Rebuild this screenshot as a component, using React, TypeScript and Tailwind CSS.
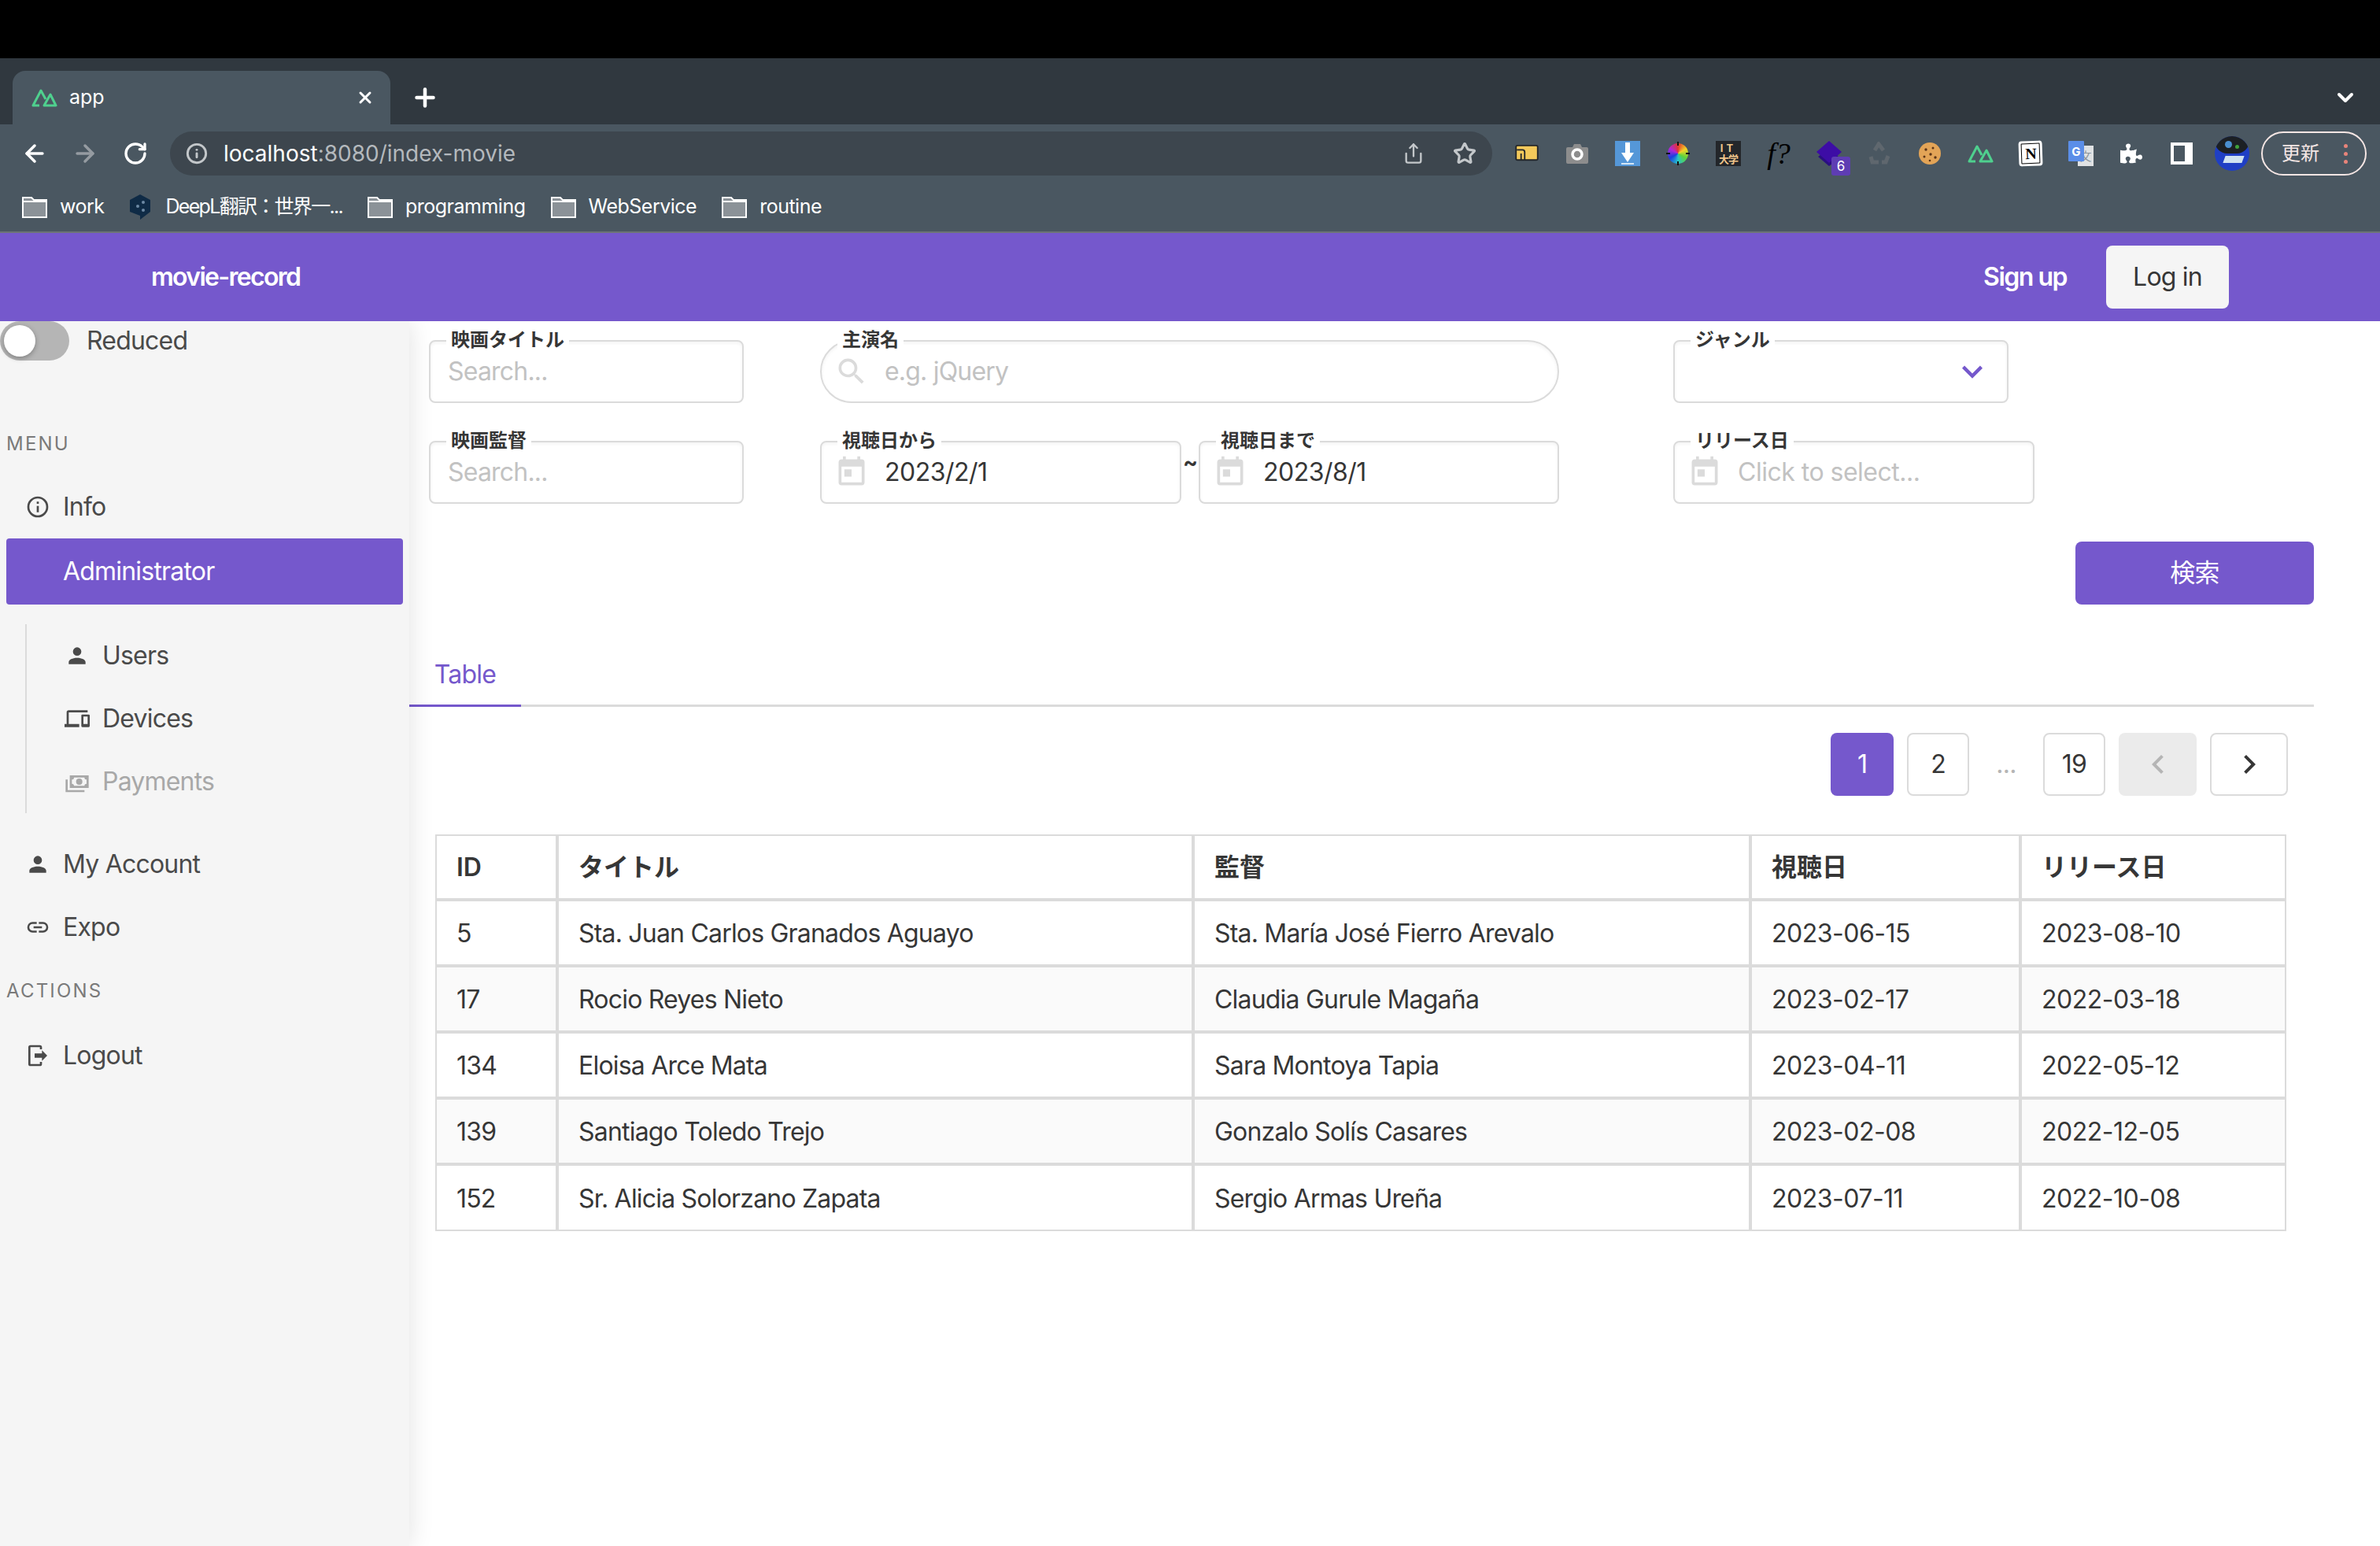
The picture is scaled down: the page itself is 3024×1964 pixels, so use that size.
import React from 'react';
import { ArrowLeft, ArrowRight, RotateCw, Info, Share, Star, Plus, X, ChevronDown } from 'lucide-react';
import { FaPuzzlePiece } from 'react-icons/fa';

const mdi = {
  info: 'M11,9H13V7H11M12,20C7.59,20 4,16.41 4,12C4,7.59 7.59,4 12,4C16.41,4 20,7.59 20,12C20,16.41 16.41,20 12,20M12,2A10,10 0 0,0 2,12A10,10 0 0,0 12,22A10,10 0 0,0 22,12A10,10 0 0,0 12,2M11,17H13V11H11V17Z',
  account: 'M12,4A4,4 0 0,1 16,8A4,4 0 0,1 12,12A4,4 0 0,1 8,8A4,4 0 0,1 12,4M12,14C16.42,14 20,15.79 20,18V20H4V18C4,15.79 7.58,14 12,14Z',
  devices: 'M22,17H18V10H22M23,8H17A1,1 0 0,0 16,9V19A1,1 0 0,0 17,20H23A1,1 0 0,0 24,19V9A1,1 0 0,0 23,8M4,6H22V4H4A2,2 0 0,0 2,6V17H0V20H14V17H4V6Z',
  cash: 'M5,6H23V18H5V6M14,9A3,3 0 0,1 17,12A3,3 0 0,1 14,15A3,3 0 0,1 11,12A3,3 0 0,1 14,9M9,8A2,2 0 0,1 7,10V14A2,2 0 0,1 9,16H19A2,2 0 0,1 21,14V10A2,2 0 0,1 19,8H9M1,10H3V20H19V22H1V10Z',
  link: 'M3.9,12C3.9,10.29 5.29,8.9 7,8.9H11V7H7A5,5 0 0,0 2,12A5,5 0 0,0 7,17H11V15.1H7C5.29,15.1 3.9,13.71 3.9,12M8,13H16V11H8V13M17,7H13V8.9H17C18.71,8.9 20.1,10.29 20.1,12C20.1,13.71 18.71,15.1 17,15.1H13V17H17A5,5 0 0,0 22,12A5,5 0 0,0 17,7Z',
  logout: 'M16,17V14H9V10H16V7L21,12L16,17M14,2A2,2 0 0,1 16,4V6H14V4H5V20H14V18H16V20A2,2 0 0,1 14,22H5A2,2 0 0,1 3,20V4A2,2 0 0,1 5,2H14Z',
  magnify: 'M9.5,3A6.5,6.5 0 0,1 16,9.5C16,11.11 15.41,12.59 14.44,13.73L14.71,14H15.5L20.5,19L19,20.5L14,15.5V14.71L13.73,14.44C12.59,15.41 11.11,16 9.5,16A6.5,6.5 0 0,1 3,9.5A6.5,6.5 0 0,1 9.5,3M9.5,5C7,5 5,7 5,9.5C5,12 7,14 9.5,14C12,14 14,12 14,9.5C14,7 12,5 9.5,5Z',
  calendar: 'M7,10H12V15H7M19,19H5V8H19M19,3H18V1H16V3H8V1H6V3H5C3.89,3 3,3.9 3,5V19A2,2 0 0,0 5,21H19A2,2 0 0,0 21,19V5A2,2 0 0,0 19,3Z',
  chevronDown: 'M7.41,8.58L12,13.17L16.59,8.58L18,10L12,16L6,10L7.41,8.58Z',
  chevronLeft: 'M15.41,16.58L10.83,12L15.41,7.41L14,6L8,12L14,18L15.41,16.58Z',
  chevronRight: 'M8.59,16.58L13.17,12L8.59,7.41L10,6L16,12L10,18L8.59,16.58Z',
};

const Mdi = ({ d, className }: { d: string; className?: string }) => (
  <svg viewBox="0 0 24 24" className={className} fill="currentColor">
    <path d={d} />
  </svg>
);

const Nuxt = ({ className }: { className?: string }) => (
  <svg viewBox="0 0 33 24" className={className} fill="none" stroke="#4fd08e" strokeWidth="3" strokeLinejoin="round">
    <path d="M10 22H2L12 3l6 11" />
    <path d="M24 8l7 14H16z" />
  </svg>
);

const FolderIcon = () => (
  <svg viewBox="0 0 32 28" className="h-[28px] w-[32px] shrink-0" fill="none">
    <path d="M1 5V2h11l3 3h16v22H1z" fill="#8b9298" stroke="#fff" strokeWidth="2" />
    <path d="M1 7h30" stroke="#fff" strokeWidth="2" />
  </svg>
);

const Bookmark = ({ label }: { label: string }) => (
  <div className="flex items-center gap-4">
    <FolderIcon />
    <span>{label}</span>
  </div>
);

const extensions: React.ReactNode[] = [
  <svg viewBox="0 0 32 24" className="h-[22px] w-[32px]" key="files">
    <rect x="1" y="1" width="30" height="20" rx="2" fill="#f3c95b" stroke="#23262a" strokeWidth="2" />
    <path d="M2 7h8a3 3 0 0 1 3 3v11M8 21v-9" fill="none" stroke="#23262a" strokeWidth="2" />
  </svg>,
  <svg viewBox="0 0 30 28" className="h-[28px] w-[30px]" key="camera">
    <path d="M3 6h6l2-4h8l2 4h6a2 2 0 0 1 2 2v17a2 2 0 0 1-2 2H3a2 2 0 0 1-2-2V8a2 2 0 0 1 2-2z" fill="#8d8d8d" />
    <circle cx="15" cy="15" r="6" fill="none" stroke="#fff" strokeWidth="3.5" />
  </svg>,
  <svg viewBox="0 0 32 32" className="h-[32px] w-[32px]" key="download">
    <rect width="32" height="32" fill="#5597d8" />
    <path d="M13 2h6v13h5l-8 12-8-12h5z" fill="#fff" />
    <path d="M8 29h16" stroke="#fff" strokeWidth="1.5" />
  </svg>,
  <div className="relative flex h-[32px] w-[32px] items-center justify-center" key="color">
    <div className="h-[26px] w-[26px] rounded-full bg-[conic-gradient(#e0342f,#f5d328,#5fd33a,#27c6c8,#1a3fe0,#b027d6,#e0342f)]" />
    <svg viewBox="0 0 32 32" className="absolute inset-0">
      <path d="M16 1v5M16 26v5M1 16h5M26 16h5" stroke="#111" strokeWidth="2" />
    </svg>
  </div>,
  <div className="flex h-[32px] w-[32px] flex-col items-center justify-center bg-[#23262a] text-[13px] font-bold leading-[14px] tracking-normal text-[#f0c68c]" key="it">
    <span className="tracking-[4px]">IT</span>
    <span className="tracking-[-1px]">大学</span>
  </div>,
  <span className="font-['Liberation_Serif',serif] text-[38px] italic leading-none tracking-normal text-black" key="f">f?</span>,
  <div className="relative h-[32px] w-[32px]" key="stack">
    <svg viewBox="0 0 32 32" className="h-[32px] w-[32px]">
      <path d="M16 10l14 12-14 10L2 20z" fill="#2a0f80" />
      <path d="M16 0l16 14-16 14L0 14z" fill="#3d0da5" />
    </svg>
    <span className="absolute left-[19px] top-[20px] flex h-[24px] w-[24px] items-center justify-center rounded-[3px] bg-[#5e3db3] text-[17px] leading-none tracking-normal text-white">6</span>
  </div>,
  <svg viewBox="0 0 30 30" className="h-[30px] w-[30px]" key="recycle" fill="none" stroke="#5f676e" strokeWidth="5">
    <path d="M9 11l5-8 6 8M4 19l2 7h8M26 18l-3 8h-5" />
  </svg>,
  <svg viewBox="0 0 28 28" className="h-[28px] w-[28px]" key="cookie">
    <circle cx="14" cy="14" r="14" fill="#e3a457" />
    <circle cx="9" cy="9" r="1.7" fill="#5b3418" />
    <circle cx="18" cy="7" r="1.5" fill="#5b3418" />
    <circle cx="15" cy="15" r="1.7" fill="#5b3418" />
    <circle cx="7" cy="18" r="1.5" fill="#5b3418" />
    <circle cx="21" cy="19" r="1.7" fill="#5b3418" />
    <circle cx="14" cy="23" r="1.3" fill="#5b3418" />
  </svg>,
  <Nuxt className="h-[24px] w-[33px]" key="nuxt" />,
  <div className="flex h-[32px] w-[30px] -rotate-2 items-center justify-center rounded-[4px] border-[3px] border-white bg-black" key="notion">
    <div className="flex h-[24px] w-[22px] items-center justify-center bg-white font-['Liberation_Serif',serif] text-[20px] font-bold leading-none text-black">N</div>
  </div>,
  <div className="relative h-[32px] w-[32px]" key="translate">
    <div className="absolute bottom-0 right-0 flex h-[26px] w-[20px] items-center justify-center bg-[#dfe1e3] text-[15px] leading-none tracking-normal text-[#8b949b]">文</div>
    <div className="absolute left-0 top-0 flex h-[26px] w-[20px] items-center justify-center rounded-[1px] bg-[#5b8ee8] text-[15px] font-bold leading-none tracking-normal text-white">G</div>
  </div>,
  <FaPuzzlePiece className="h-[28px] w-[28px] text-white" key="puzzle" />,
  <div className="h-[28px] w-[28px] border-y-[4px] border-l-[4px] border-r-[10px] border-white" key="side" />,
  <div className="relative h-[44px] w-[44px] overflow-hidden rounded-full bg-[#1f3fc4]" key="avatar">
    <div className="h-[22px] w-[44px] rounded-b-[16px] bg-[#1c2024]" />
    <div className="absolute left-[13px] top-[6px] h-[9px] w-[9px] rounded-full bg-[#4a8fd0]" />
    <div className="absolute left-[26px] top-[11px] h-[5px] w-[5px] rounded-full bg-[#3fa33a]" />
    <div className="absolute left-[12px] top-[25px] h-[9px] w-[24px] skew-x-[-20deg] bg-[#cfe2f0]" />
  </div>,
];

const Field = ({ label, className, children }: { label: string; className: string; children: React.ReactNode }) => (
  <div className={`relative flex h-[80px] items-center border-2 border-[#dbdbdb] bg-white shadow-[inset_0_2px_4px_rgba(10,10,10,0.05)] ${className}`}>
    <span className="absolute -top-[14px] left-[20px] bg-white px-[6px] text-[24px] font-semibold leading-[24px] tracking-normal text-[#363636]">{label}</span>
    {children}
  </div>
);

const inputClass = 'w-full bg-transparent text-[32px] text-[#363636] outline-none placeholder:text-[#c2c2c2]';

const DateField = ({ label, value, placeholder, className }: { label: string; value?: string; placeholder?: string; className: string }) => (
  <Field label={label} className={`rounded-lg ${className}`}>
    <Mdi d={mdi.calendar} className="ml-[16px] h-[44px] w-[44px] shrink-0 text-[#dbdbdb]" />
    <input readOnly value={value ?? ''} placeholder={placeholder} className={`${inputClass} ml-[20px] tracking-[-0.5px]`} />
  </Field>
);

const MenuItem = ({ icon, label, muted }: { icon: string; label: string; muted?: boolean }) => (
  <div className={`flex h-[80px] items-center gap-4 ${muted ? 'text-[#a8a8a8]' : 'text-[#4a4a4a]'}`}>
    <Mdi d={icon} className="h-[32px] w-[32px] shrink-0" />
    <span>{label}</span>
  </div>
);

const rows = [
  ['5', 'Sta. Juan Carlos Granados Aguayo', 'Sta. María José Fierro Arevalo', '2023-06-15', '2023-08-10'],
  ['17', 'Rocio Reyes Nieto', 'Claudia Gurule Magaña', '2023-02-17', '2022-03-18'],
  ['134', 'Eloisa Arce Mata', 'Sara Montoya Tapia', '2023-04-11', '2022-05-12'],
  ['139', 'Santiago Toledo Trejo', 'Gonzalo Solís Casares', '2023-02-08', '2022-12-05'],
  ['152', 'Sr. Alicia Solorzano Zapata', 'Sergio Armas Ureña', '2023-07-11', '2022-10-08'],
];
const headers = ['ID', 'タイトル', '監督', '視聴日', 'リリース日'];
const colWidths = ['w-[155px]', 'w-[808px]', 'w-[708px]', 'w-[343px]', 'w-[334px]'];

export default function App() {
  return (
    <div className="flex h-[1964px] w-[3024px] flex-col overflow-hidden bg-white font-['Inter','Noto_Sans_CJK_JP',sans-serif] text-[32px] tracking-[-0.8px] text-[#363636]">
      {/* browser chrome */}
      <div className="h-[74px] bg-black" />
      <div className="flex h-[84px] items-end justify-between bg-[#30383f] pl-4 pr-[28px]">
        <div className="flex items-center">
          <div className="flex h-[68px] w-[480px] items-center rounded-t-[16px] bg-[#4a5761] pl-6 pr-5 text-[25px] tracking-normal text-white">
            <Nuxt className="h-[24px] w-[33px]" />
            <span className="ml-[15px] flex-1">app</span>
            <X className="h-[24px] w-[24px]" strokeWidth={3} />
          </div>
          <Plus className="ml-[26px] h-[36px] w-[36px] text-white" strokeWidth={3} />
        </div>
        <ChevronDown className="mb-[18px] h-[32px] w-[32px] text-white" strokeWidth={3} />
      </div>
      <div className="flex h-[74px] items-center bg-[#4a5761] pl-3">
        <div className="flex w-[64px] justify-center"><ArrowLeft className="h-[34px] w-[34px] text-white" strokeWidth={2.5} /></div>
        <div className="flex w-[64px] justify-center"><ArrowRight className="h-[34px] w-[34px] text-[#959ba1]" strokeWidth={2.5} /></div>
        <div className="flex w-[64px] justify-center"><RotateCw className="h-[32px] w-[32px] text-white" strokeWidth={2.5} /></div>
        <div className="ml-3 flex h-[56px] w-[1680px] items-center rounded-full bg-[#3d464e] pl-5 pr-[20px]">
          <Info className="h-[28px] w-[28px] text-[#c3c7ca]" strokeWidth={2.5} />
          <span className="ml-[20px] flex-1 text-[28px] tracking-normal text-[#b4b9bd]"><span className="text-white">localhost</span>:8080/index-movie</span>
          <Share className="h-[28px] w-[28px] text-[#c3c7ca]" />
          <Star className="ml-[36px] h-[30px] w-[30px] text-[#c3c7ca]" strokeWidth={2.5} />
        </div>
        <div className="ml-3 flex">
          {extensions.map((icon, i) => (
            <div key={i} className="flex h-[64px] w-[64px] items-center justify-center">{icon}</div>
          ))}
        </div>
        <div className="ml-[5px] flex h-[56px] w-[134px] items-center justify-between rounded-full border-2 border-[#f5e6e4] pl-[24px] pr-[22px] text-[24px] tracking-normal text-[#f5e6e4]">
          <span>更新</span>
          <div className="flex flex-col gap-[5px]">
            <div className="h-[5px] w-[5px] rounded-full bg-[#e8847a]" />
            <div className="h-[5px] w-[5px] rounded-full bg-[#e8847a]" />
            <div className="h-[5px] w-[5px] rounded-full bg-[#e8847a]" />
          </div>
        </div>
      </div>
      <div className="flex h-[64px] items-center gap-[32px] border-b-2 border-[#6d7378] bg-[#4a5761] pl-[28px] text-[25px] tracking-[-0.5px] text-white">
        <Bookmark label="work" />
        <div className="flex items-center gap-[20px]">
          <svg viewBox="0 0 26 32" className="h-[32px] w-[26px]">
            <path d="M13 0l13 7v15l-13 10v-5L0 22V7z" fill="#0f2b46" />
            <circle cx="10" cy="15" r="2" fill="#6d8aa5" />
            <circle cx="17" cy="10" r="2" fill="#6d8aa5" />
            <circle cx="17" cy="20" r="2" fill="#6d8aa5" />
          </svg>
          <span className="tracking-[-1.7px]">DeepL翻訳：世界一...</span>
        </div>
        <Bookmark label="programming" />
        <Bookmark label="WebService" />
        <Bookmark label="routine" />
      </div>

      {/* app navbar */}
      <header className="relative z-20 flex h-[112px] shrink-0 items-center bg-[#7558cc] pl-[192px] pr-[192px] text-white">
        <span className="flex-1 font-semibold tracking-[-1.7px]">movie-record</span>
        <span className="font-semibold tracking-[-1.5px]">Sign up</span>
        <div className="ml-[50px] flex h-[80px] w-[156px] items-center justify-center rounded-lg bg-[#f5f5f5] text-[#363636]">Log in</div>
      </header>

      <div className="flex min-h-0 flex-1">
        {/* sidebar */}
        <aside className="relative z-10 w-[520px] shrink-0 bg-[#f5f5f5] pl-2 pr-2 shadow-[0_0_30px_rgba(0,0,0,0.12)]">
          <div className="-ml-2 flex h-[50px] items-center">
            <div className="flex h-[50px] w-[88px] items-center rounded-full bg-[#b5b5b5] pl-[5px]">
              <div className="h-[40px] w-[40px] rounded-full bg-white shadow-[0_2px_6px_rgba(0,0,0,0.3)]" />
            </div>
            <span className="ml-[22px] text-[#4a4a4a]">Reduced</span>
          </div>
          <div className="mb-[28px] mt-[94px] h-[24px] text-[24px] leading-[24px] tracking-[2.2px] text-[#7a7a7a]">MENU</div>
          <div className="pl-6">
            <MenuItem icon={mdi.info} label="Info" />
          </div>
          <div className="flex h-[84px] items-center rounded bg-[#7558cc] pl-[72px] text-white">Administrator</div>
          <div className="ml-[24px] mt-[25px] border-l-2 border-[#dbdbdb] pl-[48px]">
            <MenuItem icon={mdi.account} label="Users" />
            <MenuItem icon={mdi.devices} label="Devices" />
            <MenuItem icon={mdi.cash} label="Payments" muted />
          </div>
          <div className="mt-[25px] pl-6">
            <MenuItem icon={mdi.account} label="My Account" />
            <MenuItem icon={mdi.link} label="Expo" />
          </div>
          <div className="flex h-[82px] items-center text-[24px] tracking-[2.2px] text-[#7a7a7a]">ACTIONS</div>
          <div className="mt-[1px] pl-6">
            <MenuItem icon={mdi.logout} label="Logout" />
          </div>
        </aside>

        {/* main */}
        <main className="min-w-0 flex-1 pl-[25px] pr-[84px] pt-6">
          <div className="flex">
            <div className="flex w-[400px] flex-col gap-[48px]">
              <Field label="映画タイトル" className="rounded-lg">
                <input placeholder="Search..." className={`${inputClass} pl-[22px]`} />
              </Field>
              <Field label="映画監督" className="rounded-lg">
                <input placeholder="Search..." className={`${inputClass} pl-[22px]`} />
              </Field>
            </div>
            <div className="ml-[97px] flex w-[939px] flex-col gap-[48px]">
              <Field label="主演名" className="rounded-full">
                <Mdi d={mdi.magnify} className="ml-[16px] h-[44px] w-[44px] shrink-0 text-[#dbdbdb]" />
                <input placeholder="e.g. jQuery" className={`${inputClass} ml-[20px]`} />
              </Field>
              <div className="flex items-center">
                <DateField label="視聴日から" value="2023/2/1" className="w-[459px]" />
                <span className="mb-[26px] flex w-[22px] justify-center text-[28px] font-bold leading-none text-[#363636]">~</span>
                <DateField label="視聴日まで" value="2023/8/1" className="w-[458px]" />
              </div>
            </div>
            <div className="ml-[145px] flex flex-col gap-[48px]">
              <Field label="ジャンル" className="w-[426px] justify-end rounded-lg">
                <Mdi d={mdi.chevronDown} className="mr-[18px] h-[52px] w-[52px] text-[#7558cc]" />
              </Field>
              <DateField label="リリース日" placeholder="Click to select..." className="w-[459px]" />
            </div>
          </div>

          <div className="mt-[48px] flex justify-end">
            <button className="h-[80px] w-[303px] rounded-lg bg-[#7558cc] text-white">検索</button>
          </div>

          <div className="-ml-[25px] mt-[50px] flex h-[80px] border-b-[3px] border-[#dbdbdb]">
            <div className="-mb-[3px] flex h-[80px] w-[142px] items-center justify-center border-b-[3px] border-[#7558cc] text-[#7558cc]">Table</div>
          </div>

          <div className="mt-[33px] flex items-center justify-end gap-[17px] pr-[33px]">
            <div className="flex h-[80px] w-[80px] items-center justify-center rounded-lg bg-[#7558cc] text-white">1</div>
            <div className="flex h-[80px] w-[79px] items-center justify-center rounded-lg border-2 border-[#dbdbdb]">2</div>
            <div className="flex h-[80px] w-[60px] items-center justify-center text-[#b5b5b5]">...</div>
            <div className="flex h-[80px] w-[79px] items-center justify-center rounded-lg border-2 border-[#dbdbdb]">19</div>
            <div className="flex h-[80px] w-[99px] items-center justify-center rounded-lg bg-[#ebebeb] text-[#b5b5b5]">
              <Mdi d={mdi.chevronLeft} className="h-[48px] w-[48px]" />
            </div>
            <div className="flex h-[80px] w-[99px] items-center justify-center rounded-lg border-2 border-[#dbdbdb]">
              <Mdi d={mdi.chevronRight} className="h-[48px] w-[48px]" />
            </div>
          </div>

          <div className="ml-[8px] mt-[49px] w-[2352px] border-2 border-[#dbdbdb]">
            <table className="w-full table-fixed border-separate border-spacing-0">
              <thead>
                <tr className="h-[83px]">
                  {headers.map((h, i) => (
                    <th key={h} className={`${colWidths[i]} border-b-4 border-[#dbdbdb] pl-[25px] text-left font-semibold tracking-normal ${i < 4 ? 'border-r-4' : ''}`}>{h}</th>
                  ))}
                </tr>
              </thead>
              <tbody>
                {rows.map((row, r) => (
                  <tr key={row[0]} className={`${r < 4 ? 'h-[84px]' : 'h-[81px]'} ${r % 2 === 1 ? 'bg-[#fafafa]' : 'bg-white'}`}>
                    {row.map((cell, i) => (
                      <td key={i} className={`border-[#dbdbdb] pl-[25px] pt-[2px] ${i >= 3 ? 'tracking-[-0.5px]' : ''} ${r < 4 ? 'border-b-4' : ''} ${i < 4 ? 'border-r-4' : ''}`}>{cell}</td>
                    ))}
                  </tr>
                ))}
              </tbody>
            </table>
          </div>
        </main>
      </div>
    </div>
  );
}
